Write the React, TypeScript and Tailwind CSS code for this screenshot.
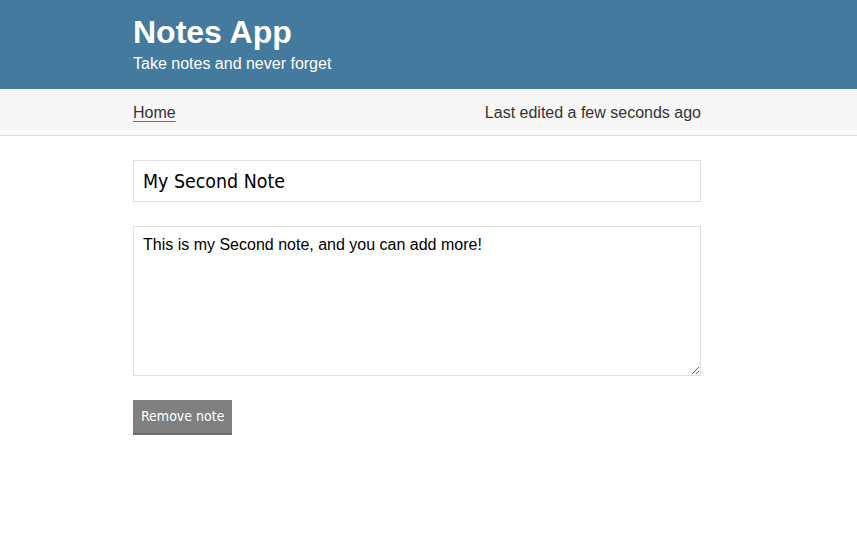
import React from "react";

export default function App() {
  return (
    <div className="min-h-[538px] bg-white" style={{ fontFamily: '"Liberation Sans", Arial, sans-serif' }}>
      <header className="bg-[#437a9e] h-[89px] pl-[133px] pt-[13px]">
        <h1 className="text-[32px] font-bold text-white leading-[38px]">Notes App</h1>
        <p className="text-[16px] text-white leading-[20px] mt-[3px]">Take notes and never forget</p>
      </header>
      <nav className="bg-[#f7f7f7] border-b border-[#dedede] h-[47px] flex items-center">
        <div className="ml-[133px] w-[568px] flex justify-between items-center text-[16px] text-[#333] pt-[1px]">
          <a href="#" className="underline decoration-[#437a9e] underline-offset-[3px]">Home</a>
          <span>Last edited a few seconds ago</span>
        </div>
      </nav>
      <main className="ml-[133px] w-[568px] pt-[24px] flex flex-col">
        <input
          defaultValue="My Second Note"
          className="h-[42px] border border-[#dedede] px-[9px] text-[19.4px] text-black outline-none"
          style={{ fontFamily: '"DejaVu Sans Condensed", "DejaVu Sans", sans-serif' }}
        />
        <textarea
          defaultValue="This is my Second note, and you can add more!"
          className="mt-[24px] h-[150px] border border-[#dedede] px-[9px] pt-[6px] pb-[8px] text-[16px] text-black outline-none resize-y"
          style={{ fontFamily: '"Liberation Sans", Arial, sans-serif' }}
        />
        <div className="mt-[24px]">
          <button
            className="bg-[#808080] text-white text-[14px] h-[35px] px-[8px] border-b-2 border-[#6d6d6d]"
            style={{ fontFamily: '"DejaVu Sans Condensed", "DejaVu Sans", sans-serif' }}
          >
            Remove note
          </button>
        </div>
      </main>
    </div>
  );
}
